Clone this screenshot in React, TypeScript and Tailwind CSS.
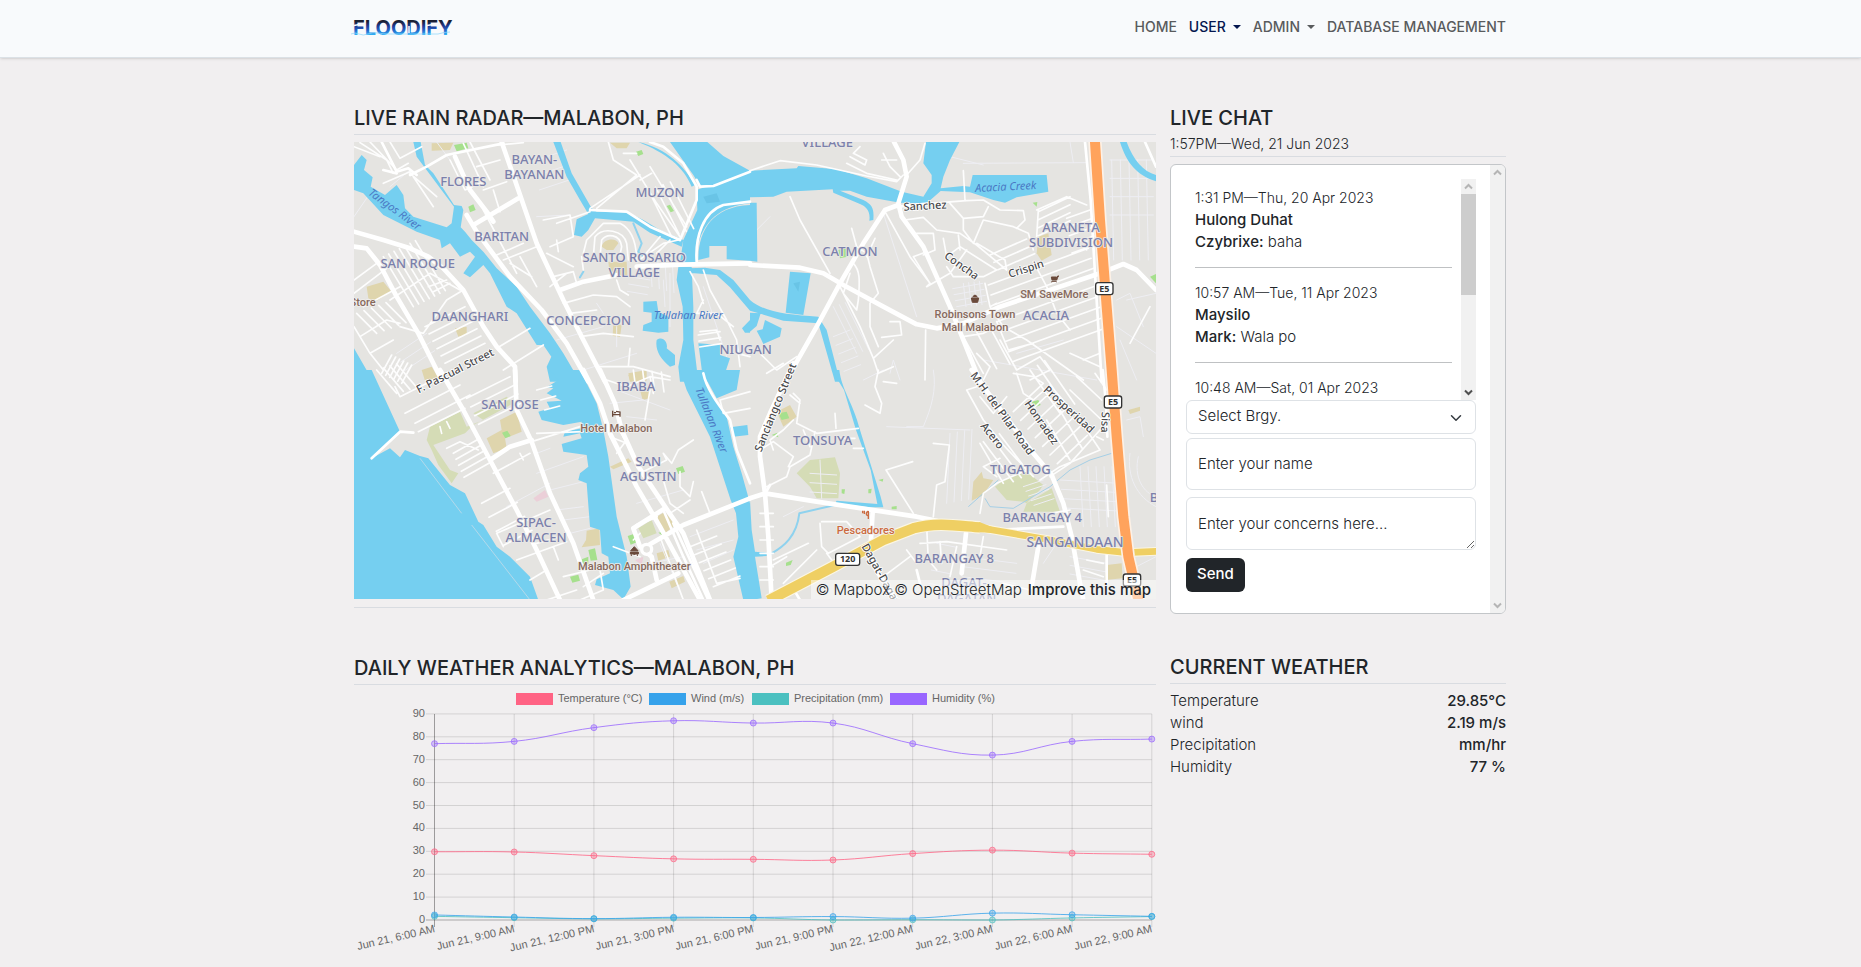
import React from "react";

/* ------------------------------------------------------------------ */
/* Map data                                                            */
/* ------------------------------------------------------------------ */

type Tile = {
  x: number;
  y: number;
  water: string;
  canal: string;
  green: string;
  park: string;
  sand: string;
  faint: string;
  minor: string;
  mid: string;
  major: string;
};

/** Parallel streets: n segments of vector (dx, dy), each shifted by (sx, sy). */
function rows(x: number, y: number, dx: number, dy: number, sx: number, sy: number, n: number): string {
  let d = "";
  for (let i = 0; i < n; i++) d += `M${x + sx * i},${y + sy * i}l${dx},${dy}`;
  return d;
}

const TILES: Tile[] = [
  {
    x: 0,
    y: 0,
    water:
      "M12,75L35,45L50,60L42,90L68,112L62,140L105,165L140,135L160,165L165,205L190,230L290,262L305,250L312,200L200,50L190,6L212,6L225,75L250,100L312,195L335,198L340,210L332,262L345,275L365,300L400,335L440,385L500,440L540,500L600,580L640,640L690,725L600,725L590,680L604,650L580,615L560,615L535,575L500,520L470,500L420,400L400,375L360,412L340,400L375,350L360,335L330,350L300,310L275,325L270,300L200,275L100,225L40,160L12,150Z" +
      "M610,6L632,6L665,100L725,205L740,215L830,215L880,240L930,270L1000,300L995,320L900,278L850,245L735,235L715,270L695,290L672,285L680,238L715,222L690,180L650,110Z" +
      "M960,6L1072,6L1120,48L1200,92L1090,138L1050,138L1030,105L1005,70ZM865,6C950,25 1005,80 1035,135L1025,140C1000,80 950,40 865,6Z" +
      "M1040,150L1200,92L1200,190C1110,200 1060,240 1040,330L1040,368L990,368L1000,300L1042,210Z" +
      "M1045,360C1045,280 1080,200 1200,195L1200,362L1130,358L1130,318L1078,318L1078,352Z" +
      "M985,380L1025,380L1030,500L1030,600L1045,725L990,725L985,680L1000,600L998,500L980,420Z" +
      "M1015,385L1065,383L1110,390L1150,420L1200,480L1200,512L1140,442L1100,405L1015,398Z" +
      "M880,485L920,483L925,515L955,530L955,575L925,578L878,572L880,555L905,545L905,518L880,515Z" +
      "M920,600C940,585 955,610 950,625L975,645L975,675L960,680C930,655 915,630 920,600Z" +
      "M1045,610L1110,615L1110,645L1140,655L1125,700L1140,725L1060,725Z" +
      "M1176,565L1200,540L1200,578L1185,578Z" +
      "M12,625L70,725L12,725Z",
    canal: "M850,250L875,310L865,335L880,350M690,412L700,395",
    green: "M312,15L350,8L355,25L320,34ZM355,200L370,193L377,210L360,217ZM858,35L875,30L880,42L865,48ZM950,198L960,194L972,213L962,217Z",
    park: "",
    sand:
      "M245,10L310,8L300,30L245,32ZM50,440L100,425L125,455L75,485L55,475ZM755,320C760,295 800,292 805,310L790,330L770,330ZM775,365L830,365L832,405L780,410ZM315,565L350,560L350,585L325,590ZM790,550L815,555L810,590L788,588ZM215,690L245,680L270,722L225,722ZM780,8L840,8L830,25L800,25ZM835,700L890,690L890,722L840,722Z",
    faint:
      rows(560, 60, 90, -30, 4, 45, 3) +
      rows(840, 410, 60, 10, -4, 22, 3) +
      rows(900, 330, 6, 110, 22, 6, 4) +
      rows(140, 640, 90, -60, 12, 26, 3) +
      "M620,600L760,560M800,620L800,560M700,690L860,640M180,90L120,140M560,230L660,225M260,6L300,60M60,160L12,230M740,490L760,520M960,400L960,560M940,420L945,500M1060,440L1130,650",
    minor:
      rows(100, 350, 90, 150, 16, -8, 7) +
      rows(20, 520, 60, 60, 22, -8, 5) +
      rows(225, 560, 120, -60, 12, 22, 6) +
      rows(95, 700, 30, -55, 12, 6, 6) +
      rows(1045, 585, 65, -10, 2, 18, 3) +
      rows(895, 150, 70, 140, 22, -8, 4) +
      "M12,20L90,50M30,8L110,60L130,100M60,6L140,90L175,70M100,130L180,95L250,200M180,100L260,170M120,6L150,55L215,20M340,10L400,140M380,80L450,60M400,150L470,125M360,6L420,120M430,150L450,215M300,60L345,150L390,130M445,15L520,8M400,210L500,400M440,345L520,310M460,360L560,320M580,240L660,225L670,290L600,320M620,300L625,335M590,340L670,380M480,370L545,410M510,350L560,440M610,410L670,395L680,430M600,440L650,400M12,420L80,370M12,460L110,385M40,500L150,440M120,480L240,400L330,450M235,440L290,420M250,455L300,430M150,560L220,580L290,480L340,450M12,560L60,640L130,600M60,640L100,690M30,590L110,540L150,550M640,490L730,465L800,470L840,500M660,520L740,510M690,590L760,580L850,590M800,420L810,450L835,465M740,680L850,680L960,710M840,625L835,680M720,205L870,105M720,215L620,250M740,205L860,105L790,60L775,6M840,60L920,190L990,290M900,80L1010,260M870,120L905,100M820,40L860,40M985,300L940,310L860,365M700,340L710,300L760,250L810,250C850,270 860,320 860,365M730,350L735,290C760,260 820,270 830,310L835,360M750,350L755,300C770,280 810,280 815,320L810,345M695,350L700,390M920,340L960,300M880,350L930,290M1020,395L1045,440L1060,490M1060,390L1080,450L1130,540L1160,600L1170,680M1050,575L1100,570L1110,600M1060,480L1040,520L1100,520L1150,560M440,625L540,565M460,690L580,615M1160,640L1200,650",
    mid: "M95,6L140,95L175,85L200,105M100,90L140,100M180,105L230,80L290,45L460,10M1040,120L1050,140L1090,138L1200,95M990,300L1040,180L1040,140L1000,70L940,20L900,6M1040,365C1035,290 1060,215 1120,195L1200,185M720,210L830,215L900,260L990,300",
    major:
      "M12,275L100,300L180,325L235,350L280,385L340,450L400,560L440,620L495,680L497,725M12,320L50,325L90,375L140,470L205,580L275,720M455,6L505,150L560,310L640,480L700,600L765,725M315,50L360,150L410,215L430,245M350,225L380,275L480,410L575,510L650,610L715,725M370,255L505,175M630,450L700,425L800,405M860,380L990,374L1200,370",
  },
  {
    x: 1200,
    y: 0,
    water:
      "M0,92L140,85L145,78L260,88L350,115L455,155L520,170L545,130L545,105L520,70L528,6L628,6L600,60L580,110L572,145L640,138L660,140L668,105L890,105L895,155L800,172L765,188L730,180L660,157L572,153L530,190L450,188L350,170L300,152L270,152L340,180C370,195 372,210 370,240L358,242C362,215 350,200 330,192L250,158L248,148L110,155L70,170L0,172Z" +
      "M0,188L20,188L22,365L0,362ZM120,395L182,400L160,525L107,518Z" +
      "M0,480C40,515 110,525 205,530L230,570L270,725L255,725L205,550L100,542L0,512Z" +
      "M0,518L32,520L20,558L0,575ZM45,540L95,565L90,590L40,612L32,595L20,572L38,568Z" +
      "M1110,6L1130,6C1150,60 1180,95 1218,105L1218,124C1160,105 1130,70 1110,6Z",
    canal: "",
    green: "M265,330L290,322L292,350L270,355ZM1200,410L1218,402L1218,430ZM848,188L862,186L860,200Z",
    park: "",
    sand: "M865,290L895,280L905,345L875,362L860,340Z",
    faint:
      rows(1080, 60, 130, 0, 0, 55, 4) +
      rows(1085, 60, 6, 300, 26, 0, 5) +
      rows(640, 430, 8, 70, 16, -2, 4) +
      rows(620, 500, 90, -16, -4, -18, 4) +
      rows(250, 590, 50, -20, 8, 26, 5) +
      rows(250, 500, 70, 140, 18, -6, 3) +
      "M400,220L500,530M640,70L1010,68M960,6L970,68M560,40L700,75M1100,560L1218,640M1130,480L1218,460M1110,600L1160,720M1100,480L1140,460L1180,560M420,700L430,660L450,720M0,290L60,230M800,640L940,600M700,660L1040,720",
    minor:
      rows(865, 215, 95, -45, 0, 24, 4) +
      rows(720, 345, 110, -48, 12, 22, 3) +
      rows(715, 435, 300, -110, 8, 30, 3) +
      rows(740, 545, 290, -105, 12, 30, 5) +
      rows(950, 235, 70, -25, 4, 26, 5) +
      rows(640, 590, 60, 110, 40, -14, 3) +
      "M0,92L90,62L200,75L350,108L440,125L460,105M290,70L350,100L440,120M300,50L345,75L350,60L310,40L330,20M400,40L420,80L450,110M395,60L440,60M470,105L510,60L525,10M640,92L645,180M540,190L650,182L700,180L750,210L820,212L825,240L800,265M600,190L640,235L700,230L715,200M640,235L640,270L670,310L700,240L790,260L835,280L850,330M465,240L520,232L560,270L630,280L680,315L770,390L765,360L680,310M500,280L550,280L555,330L520,345M490,350L540,430L530,440L600,400L650,330M490,350L530,335M580,295L590,350L630,320L740,390L700,410L610,410L590,380M625,285L630,330M120,170L150,240L240,400M405,215L480,350L540,430M305,265L320,320L350,340L360,380L385,460L360,490L360,560L385,620M375,295L350,350M310,370C330,390 330,420 325,480L320,510L280,460L300,400M270,440L330,560L370,655L430,600M420,545L450,545L455,585L395,592M370,655L385,700L430,680M527,570L525,720M640,590L700,580L740,560M705,430L720,500L760,560L830,600L1000,720M850,365L890,440L920,520L960,570M720,500L740,490M740,545L775,630L850,610M860,210L950,170L1010,195M865,210L860,290M1010,330L1010,300M600,500L620,520M680,640L720,680L700,720M800,690L870,650L900,690L840,720M960,640L1050,680M1000,660L1050,640M30,640L80,690L140,650M50,700L100,670M1140,610L1200,500M750,600L800,690",
    mid: "M1005,6L1022,180L1035,400L1055,725M445,200L540,190M1185,6L1218,80",
    major:
      "M0,375L150,383L220,400L280,435L400,500L500,553L560,565L640,550L750,500L900,450L1050,400L1120,372L1160,390L1218,450M432,6L460,60L470,110L445,190L455,230L520,320L600,500L640,600L690,725M445,195L405,210L340,310L270,430L200,560L115,710",
  },
  {
    x: 0,
    y: 690,
    water:
      "M12,0L65,0L150,185L65,265L120,235L150,262L165,240L210,258L235,265L300,345L345,370L385,455L400,465L440,530L480,560L540,620L565,690L12,690Z" +
      "M600,0L690,0L740,100L760,180L775,260L800,440L830,560L842,650L820,688L790,660L735,645L740,628L780,610L775,560L755,550L750,480L720,470L710,340L685,330L690,310L715,290L710,255L640,245L635,222L695,205L690,190L640,200L645,185L695,175L695,155L640,165L575,150L565,125L600,115L590,95L635,92L590,70L610,55L590,52L625,30Z" +
      "M990,0L1058,0L1075,50L1130,140L1150,230L1175,310L1200,400L1200,690L1180,690L1150,560L1165,500L1158,430L1142,390L1080,200L1010,60Z" +
      "M1075,0L1170,0L1160,60L1100,85L1070,30ZM1140,172L1192,165L1195,195L1150,200Z",
    canal: "",
    green:
      "M456,188L472,182L482,198L466,205ZM833,498L858,490L864,515L842,524ZM978,295L998,288L1005,305L985,312ZM715,540L735,535L742,570L722,572ZM695,568L715,560L715,582L697,582ZM660,620L685,614L690,632L667,638ZM925,488L945,484L940,498Z",
    park: "M240,170L330,125L350,170L400,150L370,130L440,95L470,80L490,100L370,165L345,190L250,225L300,300L325,310L305,340L265,285L245,240L230,210ZM865,475L905,450L920,490L880,505Z",
    sand: "M450,150L500,125L515,185L465,205L470,235L430,250L410,205L455,180ZM920,440L945,425L975,465L945,490ZM710,482L748,475L750,525L695,532L708,510ZM835,15L870,10L870,35L840,35ZM780,290L835,265L845,275L790,298ZM920,550L955,540L960,560L925,572ZM958,635L1000,618L1005,635L965,655ZM870,60L900,55L900,85L878,90Z",
    faint:
      "M560,250L600,235M700,260L560,310M600,360L700,335M620,420L700,410M640,450L720,440M660,490L720,475M780,100L880,90M800,60L960,120M830,140L920,150M870,330L960,300M860,400L1000,360M930,520L1000,690M1020,500L1150,450M1040,540L1150,510M1060,580L1150,540M900,580L1000,560M470,410L600,340",
    minor:
      rows(310, 250, 80, -45, 8, 18, 5) +
      rows(165, 130, 165, -85, 30, 30, 2) +
      rows(350, 85, 130, -65, 12, 26, 4) +
      rows(80, 0, 60, 70, 20, -6, 4) +
      rows(560, 60, 45, -12, 12, 30, 3) +
      rows(1020, 530, 80, -32, 14, 24, 6) +
      rows(395, 400, 85, -45, 22, 42, 4) +
      rows(850, 0, 8, 60, 28, 2, 4) +
      "M205,185L345,115M135,50L150,80L250,30M270,170L275,190M290,155L300,175M290,235L330,215L385,240M430,310L540,250M510,250L520,270M440,490L600,420M440,490L460,530M500,570L650,515M540,630L590,600M610,530L625,570M560,520L630,500M545,215L690,170M560,190L700,185M770,30L830,50L900,20L960,30M900,60L885,150M900,20L910,70M870,310L950,270L940,250L965,280L985,240L1030,210M940,330L960,400L1000,430M990,305L990,350L1020,380L1030,335M960,430L1020,390M1055,365L1080,430M870,560L790,530M850,510L870,490M930,500L1000,690M640,620L720,600M590,690L680,660M700,650L760,610M1100,640L1170,625M1040,480L1100,640M1110,90L1120,130L1200,115M1110,90L1200,65M750,600L760,660L690,690M780,200L830,220M800,250L830,210",
    mid: "M1060,10C1070,60 1110,110 1140,150L1160,240L1200,340M940,420L1000,560L1060,690M920,440L860,465M970,460L1075,690M800,165L830,215M65,265L150,185L190,188",
    major:
      "M270,0L340,120L420,270L500,420L560,540L630,690M495,0L500,120L545,215L600,370L670,520L730,690M420,270L480,230L545,210M700,0L750,100L780,190L860,350L930,470L1050,690M750,0L795,100L815,180L865,290L945,410L1000,490L1080,690M850,475L945,415M850,475L870,530L905,560L920,630M820,690L985,610M1200,385L1000,465L905,520L880,535",
  },
  {
    x: 1200,
    y: 690,
    water:
      "M0,390L5,480L15,545L50,548L50,558L15,560L35,685L0,690ZM245,0L268,0C275,60 310,100 330,180L392,380L400,412L360,412L255,400L260,392L382,402L362,300L318,180L282,60Z",
    canal: "M65,550C100,530 140,500 148,430L255,405",
    green: "M85,130L110,125L118,145L95,150ZM845,95L865,90L872,105L855,112ZM108,578L128,570L122,585L108,588ZM275,358L285,358L283,372L275,370ZM355,358L365,356L363,370L355,370ZM385,330L400,326L398,335ZM425,410L440,408L440,418L425,418ZM65,195L82,188L85,202Z",
    park: "M180,270L255,262L270,310L265,385L200,385L180,350L140,310ZM735,350L760,330L830,305L880,345L870,360L830,400L820,395L770,390ZM830,400L905,355L930,425L820,425Z",
    sand: "M80,125L120,105L140,140L100,170ZM695,305L700,325L730,330L700,375L665,392L670,335ZM1070,585L1115,580L1118,625L1065,630ZM1135,120L1170,110L1170,122L1140,132Z",
    faint:
      rows(930, 330, 180, 10, 4, 28, 4) +
      rows(990, 290, 10, 180, 24, 0, 5) +
      rows(600, 190, -10, 210, 22, -4, 4) +
      rows(960, 560, 110, 20, 0, 26, 3) +
      rows(180, 310, 80, 5, 0, 28, 3) +
      rows(560, 520, 60, 12, -8, 40, 4) +
      rows(820, 350, 60, -20, 8, 14, 5) +
      rows(640, 560, 160, 20, -2, 30, 3) +
      "M550,0C560,60 545,110 520,170L470,170M410,170L660,180M210,270L215,385M1130,150L1170,140L1180,200M1140,250C1130,320 1160,380 1218,410M1165,260C1150,320 1180,370 1218,380M1140,600L1218,560M100,440L160,410M880,580L920,520L980,540M340,30L400,0",
    minor:
      rows(790, 125, 90, -85, 22, 26, 7) +
      rows(700, 215, 90, 120, 24, -12, 3) +
      rows(840, 0, 90, 130, 22, -14, 3) +
      rows(890, 150, 70, 120, 36, -36, 2) +
      rows(30, 430, 40, 0, 0, 40, 6) +
      "M650,60L700,150L760,225L850,320M650,60L680,50M690,80L730,130L770,80M690,220L760,340M700,290L750,265M700,290L740,320M800,10L820,70L850,90L900,45L990,150L1050,240M790,10L850,20L880,40M960,60L1055,150M980,20L1055,90M870,330L930,290L1050,240M900,320L960,280L1050,180M30,240L70,215L130,260L115,290M70,240L60,210L100,180L130,150M130,70L150,90L140,160L200,190L325,175M150,100L120,75M195,185L180,255L120,290L110,320L50,350M255,130L258,175M180,230L160,180M315,205L270,205M340,235L310,235M550,220L598,225L585,335L560,345L550,440M488,275L408,300L490,430M385,0L375,50L395,100L390,130L345,105M400,35L440,40M210,460L215,530L235,550L330,500L290,455L215,455M510,520L590,515L770,540M470,540L500,580M530,470L535,570L560,600M570,515L575,580M620,530L600,620M700,500L690,560M700,370L690,430M700,370L740,340L830,300M70,570L175,520M60,590L110,560M100,640L200,540M1070,345L1075,440M1000,600L1060,620M1010,570L1060,580M900,430L960,420M1060,210L1040,200M1035,10L1070,60M230,550L260,590M400,620L480,560M760,640L840,660",
    mid: "M1058,0L1068,100L1072,200M45,372L60,345M1070,540L1070,640M510,640L500,600M135,665L150,690M720,480L940,470",
    major:
      "M130,-20L60,130L30,200L30,260L45,370L55,500L65,690M0,385L45,370L200,395L400,425L500,440L560,452M368,425L360,560L385,610L440,690M665,0L730,90L850,250L905,315L940,400L965,500L990,640L1000,690M648,490L635,610M865,530L845,650",
  },
];

const ORANGE = "M2235,6L2250,240L2270,500L2285,690L2300,890L2320,1130L2335,1250L2365,1380";
const YELLOW_WIDE = "M1255,1382L1450,1280L1600,1200L1690,1165C1760,1145 1830,1158 1890,1162";
const YELLOW_THIN = "M1880,1162L2100,1200L2240,1228L2330,1238L2420,1234";

type Label = { t: string; x: number; y: number; r?: number; kind?: "area" | "district" | "street" | "river" | "poi" | "food" };

const LABELS: Label[] = [
  { t: "BAYAN-", x: 553, y: 58 },
  { t: "BAYANAN", x: 553, y: 102 },
  { t: "FLORES", x: 340, y: 123 },
  { t: "MUZON", x: 930, y: 156 },
  { t: "BARITAN", x: 455, y: 288 },
  { t: "SAN ROQUE", x: 203, y: 371 },
  { t: "DAANGHARI", x: 360, y: 530 },
  { t: "CONCEPCION", x: 716, y: 540 },
  { t: "SANTO ROSARIO", x: 853, y: 351 },
  { t: "VILLAGE", x: 853, y: 396 },
  { t: "NIUGAN", x: 1187, y: 627 },
  { t: "VILLAGE", x: 1432, y: 6 },
  { t: "CATMON", x: 1500, y: 335 },
  { t: "ARANETA", x: 2163, y: 263 },
  { t: "SUBDIVISION", x: 2163, y: 308 },
  { t: "ACACIA", x: 2088, y: 527 },
  { t: "IBABA", x: 858, y: 738 },
  { t: "SAN JOSE", x: 480, y: 794 },
  { t: "SAN", x: 895, y: 965 },
  { t: "AGUSTIN", x: 895, y: 1010 },
  { t: "SIPAC-", x: 558, y: 1148 },
  { t: "ALMACEN", x: 558, y: 1192 },
  { t: "TONSUYA", x: 1418, y: 901 },
  { t: "TUGATOG", x: 2011, y: 987 },
  { t: "BARANGAY 4", x: 2077, y: 1132 },
  { t: "BARANGAY 8", x: 1813, y: 1254 },
  { t: "SANGANDAAN", x: 2175, y: 1207, kind: "district" },
  { t: "DAGAT-", x: 1842, y: 1328 },
  { t: "DAGATAN", x: 1850, y: 1374 },
  { t: "B", x: 2412, y: 1072 },
  { t: "Tangos River", x: 135, y: 208, r: 36, kind: "river" },
  { t: "Tullahan River", x: 1015, y: 525, kind: "river" },
  { t: "Acacia Creek", x: 1967, y: 140, r: -3, kind: "river" },
  { t: "Tullahan River", x: 1085, y: 840, r: 68, kind: "river" },
  { t: "F. Pascual Street", x: 315, y: 692, r: -27, kind: "street" },
  { t: "Sanchez", x: 1725, y: 197, r: -3, kind: "street" },
  { t: "Concha", x: 1835, y: 377, r: 35, kind: "street" },
  { t: "Crispin", x: 2028, y: 386, r: -18, kind: "street" },
  { t: "Sanciangco Street", x: 1276, y: 802, r: -68, kind: "street" },
  { t: "M.H. del Pilar Road", x: 1957, y: 820, r: 54, kind: "street" },
  { t: "Prosperidad", x: 2157, y: 808, r: 42, kind: "street" },
  { t: "Honradez", x: 2075, y: 847, r: 55, kind: "street" },
  { t: "Acero", x: 1927, y: 887, r: 52, kind: "street" },
  { t: "Sisa", x: 2266, y: 847, r: 92, kind: "street" },
  { t: "Dagat-Dagatan", x: 1602, y: 1318, r: 61, kind: "street" },
  { t: "Store", x: 38, y: 485, kind: "poi" },
  { t: "SM SaveMore", x: 2113, y: 461, kind: "poi" },
  { t: "Robinsons Town", x: 1875, y: 522, kind: "poi" },
  { t: "Mall Malabon", x: 1875, y: 561, kind: "poi" },
  { t: "Hotel Malabon", x: 799, y: 865, kind: "poi" },
  { t: "Malabon Amphitheater", x: 853, y: 1278, kind: "poi" },
  { t: "Pescadores", x: 1547, y: 1169, kind: "food" },
];

const LABEL_STYLE = {
  area: { fill: "#7b80ab", size: 39, italic: false, weight: 500, halo: "#e9e8e6" },
  district: { fill: "#7b80ab", size: 42, italic: false, weight: 500, halo: "#e9e8e6" },
  street: { fill: "#4a4a4c", size: 33, italic: false, weight: 500, halo: "#ffffff" },
  river: { fill: "#4a78c4", size: 33, italic: true, weight: 400, halo: "none" },
  poi: { fill: "#86695c", size: 33, italic: false, weight: 500, halo: "#f1efec" },
  food: { fill: "#cb6a3f", size: 33, italic: false, weight: 500, halo: "#f1efec" },
};

const SHIELDS = [
  { t: "E5", x: 2263, y: 446 },
  { t: "E5", x: 2289, y: 786 },
  { t: "E5", x: 2346, y: 1320 },
  { t: "120", x: 1493, y: 1258 },
];

function CityMap() {
  const layer = (key: keyof Tile, props: React.SVGProps<SVGPathElement>) =>
    TILES.map((t, i) => <path key={`${key}${i}`} d={String(t[key])} transform={`translate(${t.x} ${t.y})`} {...props} />);
  const line = { fill: "none", strokeLinejoin: "round", strokeLinecap: "round" } as const;
  return (
    <svg viewBox="12 6 2406 1371" className="block h-auto w-full" role="img" aria-label="Map of Malabon">
      <rect x="0" y="0" width="2430" height="1400" fill="#e5e4e1" />
      {layer("sand", { fill: "#dfd5ad" })}
      {layer("park", { fill: "#d5dcb6" })}
      {layer("green", { fill: "#a6e08d" })}
      <path d="M550,1075L585,1050L595,1070L560,1085ZM855,1260L880,1250L875,1275Z" fill="#ebcfd8" />
      {layer("faint", { ...line, stroke: "#eeeef3", strokeWidth: 3 })}
      {layer("water", { fill: "#75cff0" })}
      <path d="M1060,170L1100,160L1110,185L1070,190ZM1330,430L1350,425L1345,455Z" fill="#69c4e6" />
      {layer("canal", { ...line, stroke: "#8fd2ee", strokeWidth: 6 })}
      <path
        d="M1855,1100L1945,1020M1905,1075L1920,1100L1990,1105L2040,1075L2100,1040L2160,990L2220,960L2285,940"
        fill="none"
        stroke="#a5cfe6"
        strokeWidth="3"
      />
      <path d="M210,955L335,1120M365,1155L540,1380" fill="none" stroke="#b4d9ea" strokeWidth="3" />
      {layer("minor", { ...line, stroke: "#fdfdfd", strokeWidth: 5 })}
      {layer("mid", { ...line, stroke: "#ffffff", strokeWidth: 8 })}
      {layer("major", { ...line, stroke: "#ffffff", strokeWidth: 14 })}
      <circle cx="890" cy="1228" r="15" fill="#e5e4e1" stroke="#ffffff" strokeWidth="10" />
      <path d={YELLOW_THIN} {...line} stroke="#fbf6e4" strokeWidth="26" />
      <path d={YELLOW_WIDE} fill="none" stroke="#fbf6e4" strokeWidth="38" />
      <path d={YELLOW_THIN} {...line} stroke="#efcf63" strokeWidth="20" />
      <path d={YELLOW_WIDE} fill="none" stroke="#efcf63" strokeWidth="31" />
      <path d="M1888,1146L1925,1160L1925,1178L1888,1177Z" fill="#efcf63" />
      <path d={ORANGE} {...line} stroke="#fdf1e6" strokeWidth="40" />
      <path d={ORANGE} {...line} stroke="#ffa35c" strokeWidth="30" />

      {LABELS.map((l, i) => {
        const kind = l.kind ?? "area";
        const s = LABEL_STYLE[kind];
        return (
          <text
            key={i}
            x={l.x}
            y={l.y + s.size * 0.35}
            transform={l.r ? `rotate(${l.r} ${l.x} ${l.y})` : undefined}
            textAnchor="middle"
            className={kind === "poi" || kind === "food" ? "font-[Roboto,sans-serif]" : "font-['Noto_Sans',sans-serif]"}
            fontSize={s.size}
            fontWeight={s.weight}
            fontStyle={s.italic ? "italic" : "normal"}
            fill={s.fill}
            stroke={s.halo}
            strokeWidth={5}
            strokeLinejoin="round"
            paintOrder="stroke"
          >
            {l.t}
          </text>
        );
      })}

      {SHIELDS.map((s, i) => {
        const w = s.t.length > 2 ? 72 : 52;
        return (
          <g key={i}>
            <rect x={s.x - w / 2} y={s.y - 18} width={w} height="36" rx="7" fill="#ffffff" stroke="#333333" strokeWidth="4" />
            <text
              x={s.x}
              y={s.y + 9}
              textAnchor="middle"
              fontSize="27"
              fontWeight="700"
              fill="#333333"
              className="font-['Noto_Sans',sans-serif]"
            >
              {s.t}
            </text>
          </g>
        );
      })}

      {/* shopping basket */}
      <path d="M1864,474h22l-3,13h-16ZM1868,472l4,-6h6l4,6" fill="#6b4a3b" stroke="#6b4a3b" strokeWidth="3" />
      {/* trolley */}
      <path d="M2104,411h16v9h-14ZM2120,420l3,-12h4M2105,427h1M2118,427h1M2104,424h16" fill="#6b4a3b" stroke="#6b4a3b" strokeWidth="3" />
      {/* bed */}
      <path d="M788,812v18M788,824h22v6M792,818h6M798,814l12,2v8" fill="none" stroke="#6b4a3b" strokeWidth="4" />
      {/* theatre */}
      <path d="M842,1232l11,-12l11,12ZM841,1236h24v6h-24ZM844,1243v5M862,1243v5M850,1243h6" fill="#6b4a3b" stroke="#6b4a3b" strokeWidth="3" />
      {/* fork and knife */}
      <path d="M1538,1112v8M1543,1112v10M1555,1113v24M1555,1113c-8,4 -8,12 -2,14" fill="none" stroke="#cb6a3f" strokeWidth="4" />
    </svg>
  );
}

/* ------------------------------------------------------------------ */
/* Weather chart                                                       */
/* ------------------------------------------------------------------ */

const TIMES = [
  "Jun 21, 6:00 AM",
  "Jun 21, 9:00 AM",
  "Jun 21, 12:00 PM",
  "Jun 21, 3:00 PM",
  "Jun 21, 6:00 PM",
  "Jun 21, 9:00 PM",
  "Jun 22, 12:00 AM",
  "Jun 22, 3:00 AM",
  "Jun 22, 6:00 AM",
  "Jun 22, 9:00 AM",
];

const SERIES = [
  { name: "Humidity (%)", color: "#9966ff", lx: 536, values: [77, 78, 84, 87, 86, 86, 77, 72, 78, 79] },
  { name: "Precipitation (mm)", color: "#4bc0c0", lx: 398, values: [1.6, 1, 0.5, 0.8, 0.9, 0, 0.1, 0, 0.9, 1.5] },
  { name: "Wind (m/s)", color: "#36a2eb", lx: 295, values: [2.2, 1.3, 0.6, 1.2, 1.1, 1.5, 0.8, 3, 2.3, 1.6] },
  { name: "Temperature (°C)", color: "#ff6384", lx: 162, values: [29.8, 29.7, 28.1, 26.7, 26.5, 26.2, 29, 30.5, 29.2, 28.7] },
];

const TICKS = [0, 10, 20, 30, 40, 50, 60, 70, 80, 90];
const px = (i: number) => 80.5 + i * 79.7;
const py = (v: number) => 235 - v * 2.29;

/** Smooth curve with tension 0.4, control points kept inside the plot. */
function curve(values: number[]): string {
  const pts = values.map((v, i) => [px(i), py(v)]);
  const ctrl = pts.map((p, i) => {
    const a = pts[Math.max(i - 1, 0)];
    const b = pts[Math.min(i + 1, pts.length - 1)];
    const d1 = Math.hypot(p[0] - a[0], p[1] - a[1]);
    const d2 = Math.hypot(b[0] - p[0], b[1] - p[1]);
    const fa = (0.4 * d1) / (d1 + d2);
    const fb = (0.4 * d2) / (d1 + d2);
    const lim = (y: number) => Math.min(235, Math.max(29, y));
    return {
      prev: [p[0] - fa * (b[0] - a[0]), lim(p[1] - fa * (b[1] - a[1]))],
      next: [p[0] + fb * (b[0] - a[0]), lim(p[1] + fb * (b[1] - a[1]))],
    };
  });
  return pts
    .map((p, i) => (i === 0 ? `M${p[0]},${p[1]}` : `C${ctrl[i - 1].next.join(",")} ${ctrl[i].prev.join(",")} ${p[0]},${p[1]}`))
    .join("");
}

function WeatherChart() {
  return (
    <svg
      viewBox="0 0 802 272"
      className="block h-auto w-full font-['Liberation_Sans',Arial,sans-serif]"
      fontSize="11"
      fill="#666666"
      role="img"
      aria-label="Daily weather chart"
    >
      {SERIES.map((s) => (
        <g key={s.name}>
          <rect x={s.lx} y="8" width="37" height="12" fill={s.color} />
          <text x={s.lx + 42} y="17">
            {s.name}
          </text>
        </g>
      ))}
      {TICKS.map((t) => (
        <g key={t}>
          <line x1="72" x2={px(9)} y1={py(t)} y2={py(t)} stroke="#000000" strokeOpacity={t === 0 ? 0.3 : 0.12} />
          <text x="71" y={py(t) + 3} textAnchor="end">
            {t}
          </text>
        </g>
      ))}
      {TIMES.map((t, i) => (
        <g key={t}>
          <line x1={px(i)} x2={px(i)} y1="29" y2="242" stroke="#000000" strokeOpacity={i === 0 ? 0.35 : 0.12} />
          <text x={px(i) + 1} y="247" textAnchor="end" transform={`rotate(-13 ${px(i) + 1} 247)`}>
            {t}
          </text>
        </g>
      ))}
      {SERIES.map((s) => (
        <g key={s.name} stroke={s.color}>
          <path d={curve(s.values)} fill="none" strokeOpacity="0.8" />
          {s.values.map((v, i) => (
            <circle key={i} cx={px(i)} cy={py(v)} r="3" fill={s.color} fillOpacity="0.35" strokeOpacity="0.7" />
          ))}
        </g>
      ))}
    </svg>
  );
}

/* ------------------------------------------------------------------ */
/* Shared pieces                                                       */
/* ------------------------------------------------------------------ */

function Logo() {
  return (
    <svg width="108" height="24" viewBox="0 0 108 24" role="img" aria-label="Floodify">
      <defs>
        <linearGradient id="logo-fill" x1="0" y1="0" x2="0" y2="1">
          <stop offset="0.22" stopColor="#1b2030" />
          <stop offset="0.42" stopColor="#1f3a93" />
          <stop offset="0.6" stopColor="#2467c9" />
          <stop offset="0.78" stopColor="#2fb0f5" />
        </linearGradient>
      </defs>
      <text x="3" y="20" fontSize="20" fontWeight="700" fill="url(#logo-fill)" className="font-[Inter,sans-serif]">
        FLOODIFY
      </text>
      <path d="M4,10.5l5,-1M59,11v7M77,10.5l6,-1" stroke="#f8fafc" strokeWidth="1.5" fill="none" />
      <path
        d="M1,19q4,-2 8,0t9,0t10,-1t12,1t12,0t12,0t12,0t12,0q6,-2 12,-2"
        stroke="#8ad4fb"
        strokeWidth="1"
        strokeOpacity="0.7"
        fill="none"
      />
    </svg>
  );
}

function Caret() {
  return (
    <svg width="8" height="4" viewBox="0 0 8 4" fill="currentColor" aria-hidden="true">
      <path d="M0 0h8L4 4z" />
    </svg>
  );
}

function Chevron({ up, className }: { up?: boolean; className: string }) {
  return (
    <svg width="9" height="7" viewBox="0 0 9 7" className={className} aria-hidden="true">
      <path d={up ? "M1 5.5L4.5 2L8 5.5" : "M1 1.5L4.5 5L8 1.5"} fill="none" stroke="currentColor" strokeWidth="2" />
    </svg>
  );
}

function Heading({ children }: { children: React.ReactNode }) {
  return <h2 className="text-xl leading-[26px] font-medium whitespace-nowrap">{children}</h2>;
}

const MESSAGES = [
  { time: "1:31 PM—Thu, 20 Apr 2023", place: "Hulong Duhat", author: "Czybrixe:", text: "baha" },
  { time: "10:57 AM—Tue, 11 Apr 2023", place: "Maysilo", author: "Mark:", text: "Wala po" },
  { time: "10:48 AM—Sat, 01 Apr 2023", place: "", author: "", text: "" },
];

const WEATHER = [
  ["Temperature", "29.85°C"],
  ["wind", "2.19 m/s"],
  ["Precipitation", "mm/hr"],
  ["Humidity", "77 %"],
];

function Chat() {
  return (
    <div className="mt-[7px] flex overflow-hidden rounded-md border border-[#c3c6c9] bg-white">
      <div className="min-w-0 flex-1 pt-3.5 pr-3.5 pb-[21px] pl-[15px]">
        <div className="flex h-[221px] overflow-hidden">
          <div className="min-w-0 flex-1 px-[9px] pt-2">
            {MESSAGES.map((m) => (
              <div key={m.time} className="mb-3.5 border-b border-[#bfc1c3] pb-3.5">
                <p>{m.time}</p>
                {m.place && <p className="text-[15px] leading-[22px] font-medium">{m.place}</p>}
                {m.author && (
                  <p className="text-[15px] leading-[22px]">
                    <strong className="font-medium">{m.author}</strong> {m.text}
                  </p>
                )}
              </div>
            ))}
          </div>
          <div className="flex w-[15px] flex-col items-center bg-[#f1f1f1]">
            <Chevron up className="my-1 shrink-0 text-[#b5b5b5]" />
            <div className="h-[101px] w-full bg-[#cdcdcd]" />
            <Chevron className="mt-auto mb-1 shrink-0 text-[#505050]" />
          </div>
        </div>
        <form className="text-[15px] leading-[22px]" onSubmit={(e) => e.preventDefault()}>
          <div className="relative">
            <select
              aria-label="Barangay"
              className="block h-[34px] w-full appearance-none rounded-md border border-[#dee2e6] bg-white px-[11px] pb-0.5"
            >
              <option>Select Brgy.</option>
            </select>
            <svg className="pointer-events-none absolute top-3 right-3.5" width="12" height="12" viewBox="0 0 16 16" aria-hidden="true">
              <path d="m2 5 6 6 6-6" fill="none" stroke="#343a40" strokeWidth="2" strokeLinecap="round" strokeLinejoin="round" />
            </svg>
          </div>
          <input
            aria-label="Enter your name"
            placeholder="Enter your name"
            className="mt-1 block h-[52px] w-full rounded-md border border-[#dee2e6] px-[11px] pb-0.5 placeholder:text-[#212529]"
          />
          <textarea
            aria-label="Enter your concerns here..."
            placeholder="Enter your concerns here..."
            className="mt-[7px] block h-[53px] w-full resize-y rounded-md border border-[#dee2e6] px-[11px] pt-[15px] placeholder:text-[#212529]"
          />
          <button type="submit" className="mt-2 block h-[34px] rounded-md bg-[#212529] px-[11px] pb-0.5 font-medium text-white">
            Send
          </button>
        </form>
      </div>
      <div className="flex w-[15px] flex-col items-center justify-between bg-[#f1f1f1] py-1">
        <Chevron up className="text-[#b5b5b5]" />
        <Chevron className="text-[#b5b5b5]" />
      </div>
    </div>
  );
}

/* ------------------------------------------------------------------ */
/* Page                                                                */
/* ------------------------------------------------------------------ */

export default function App() {
  return (
    <div className="min-h-screen bg-[#f1eff0] font-[Inter,sans-serif] text-sm leading-[22px] font-light text-[#212529]">
      <header className="border-b border-[#dbe1e6] bg-[#f8fafc] shadow-sm">
        <div className="mx-auto flex h-[57px] max-w-[1153px] items-center justify-between pr-px pb-[3px]">
          <a href="#" className="-ml-1">
            <Logo />
          </a>
          <nav className="flex items-center gap-3 font-medium text-[#595b5d]">
            <a href="#">HOME</a>
            <a href="#" className="flex items-center gap-[7px] text-[#04164f]">
              USER <Caret />
            </a>
            <a href="#" className="flex items-center gap-[7px]">
              ADMIN <Caret />
            </a>
            <a href="#">DATABASE MANAGEMENT</a>
          </nav>
        </div>
      </header>

      <main className="mx-auto grid max-w-[1153px] grid-cols-[minmax(0,1fr)_336px] gap-x-3.5 pr-px">
        <section className="pt-[47px]">
          <div className="border-b border-[#d9dce1] pb-[3px]">
            <Heading>LIVE RAIN RADAR—MALABON, PH</Heading>
          </div>
          <div className="relative mt-[7px] overflow-hidden">
            <CityMap />
            <p className="absolute right-0 bottom-0 flex h-[19px] items-center gap-1.5 bg-white/50 px-[5px] text-[15px] whitespace-nowrap">
              <span>
                <a href="#">© Mapbox</a> <a href="#">© OpenStreetMap</a>
              </span>
              <a href="#" className="font-medium">
                Improve this map
              </a>
            </p>
          </div>
          <div className="mt-2 border-b border-[#d9dce1]" />
        </section>

        <section className="pt-[47px]">
          <Heading>LIVE CHAT</Heading>
          <p className="border-b border-[#d9dce1] pt-0.5 pb-px">1:57PM—Wed, 21 Jun 2023</p>
          <Chat />
        </section>

        <section className="pt-[41px]">
          <div className="border-b border-[#d9dce1] pb-[3px]">
            <Heading>DAILY WEATHER ANALYTICS—MALABON, PH</Heading>
          </div>
          <WeatherChart />
        </section>

        <section className="pt-10">
          <div className="border-b border-[#d9dce1] pb-[3px]">
            <Heading>CURRENT WEATHER</Heading>
          </div>
          <dl className="mt-1.5 text-[15px] leading-[22px]">
            {WEATHER.map(([name, value]) => (
              <div key={name} className="flex justify-between">
                <dt>{name}</dt>
                <dd className="font-medium">{value}</dd>
              </div>
            ))}
          </dl>
        </section>
      </main>
    </div>
  );
}
